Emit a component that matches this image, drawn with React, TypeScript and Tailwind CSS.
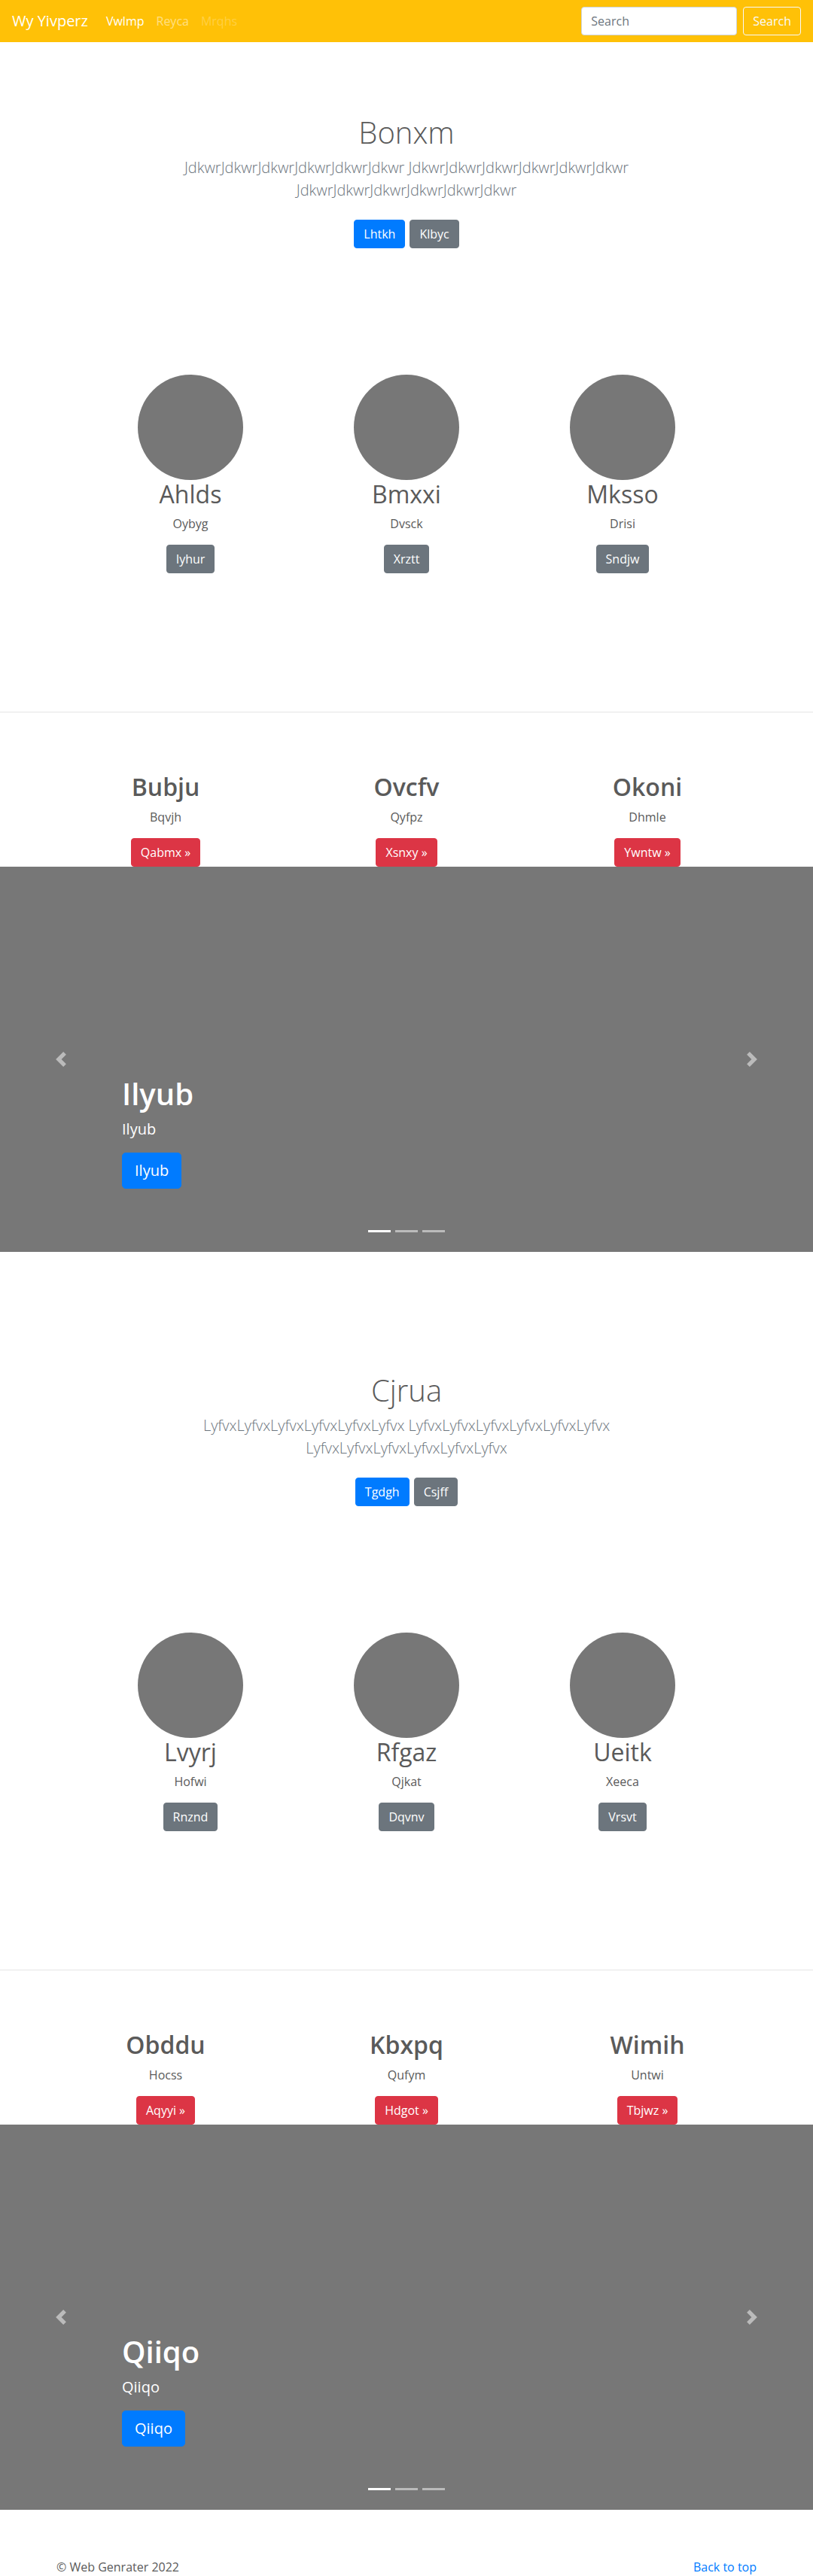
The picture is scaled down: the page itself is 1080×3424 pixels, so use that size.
import React from 'react';

type Block = {
  title: string;
  lead: string;
  actions: [string, string];
  people: { name: string; role: string; cta: string }[];
  features: { title: string; text: string; cta: string }[];
  slide: string;
};

const rep = (w: string) => w.repeat(6);

const BLOCKS: Block[] = [
  {
    title: 'Bonxm',
    lead: `${rep('Jdkwr')} ${rep('Jdkwr')} ${rep('Jdkwr')}`,
    actions: ['Lhtkh', 'Klbyc'],
    people: [
      { name: 'Ahlds', role: 'Oybyg', cta: 'Iyhur' },
      { name: 'Bmxxi', role: 'Dvsck', cta: 'Xrztt' },
      { name: 'Mksso', role: 'Drisi', cta: 'Sndjw' },
    ],
    features: [
      { title: 'Bubju', text: 'Bqvjh', cta: 'Qabmx »' },
      { title: 'Ovcfv', text: 'Qyfpz', cta: 'Xsnxy »' },
      { title: 'Okoni', text: 'Dhmle', cta: 'Ywntw »' },
    ],
    slide: 'Ilyub',
  },
  {
    title: 'Cjrua',
    lead: `${rep('Lyfvx')} ${rep('Lyfvx')} ${rep('Lyfvx')}`,
    actions: ['Tgdgh', 'Csjff'],
    people: [
      { name: 'Lvyrj', role: 'Hofwi', cta: 'Rnznd' },
      { name: 'Rfgaz', role: 'Qjkat', cta: 'Dqvnv' },
      { name: 'Ueitk', role: 'Xeeca', cta: 'Vrsvt' },
    ],
    features: [
      { title: 'Obddu', text: 'Hocss', cta: 'Aqyyi »' },
      { title: 'Kbxpq', text: 'Qufym', cta: 'Hdgot »' },
      { title: 'Wimih', text: 'Untwi', cta: 'Tbjwz »' },
    ],
    slide: 'Qiiqo',
  },
];

function Navbar() {
  return (
    <nav className="flex h-14 items-center justify-between bg-[#ffc107] px-4">
      <div className="flex items-center">
        <a href="#" className="mr-4 text-[20px] leading-[30px] text-white">
          Wy Yivperz
        </a>
        <ul className="flex text-base leading-6">
          <li>
            <a href="#" className="block px-2 py-2 text-white">
              Vwlmp
            </a>
          </li>
          <li>
            <a href="#" className="block px-2 py-2 text-white/50">
              Reyca
            </a>
          </li>
          <li>
            <span className="block px-2 py-2 text-white/25">Mrqhs</span>
          </li>
        </ul>
      </div>
      <form className="flex items-center" onSubmit={(e) => e.preventDefault()}>
        <input
          type="search"
          placeholder="Search"
          className="h-[38px] w-[207px] rounded border border-[#ced4da] bg-white px-3 text-base text-[#495057] outline-none placeholder:text-[#6c757d]"
        />
        <button
          type="submit"
          className="ml-2 h-[38px] rounded border border-[#f8f9fa] px-3 text-base text-[#f8f9fa]"
        >
          Search
        </button>
      </form>
    </nav>
  );
}

function Hero({ block }: { block: Block }) {
  return (
    <section className="pt-24 text-center">
      <h1 className="mb-2 text-[40px] leading-[48px] font-light">
        {block.title}
      </h1>
      <p className="mx-auto mb-4 max-w-[700px] text-[20px] leading-[30px] font-light text-[#6c757d]">
        {block.lead}
      </p>
      <p className="flex justify-center gap-1.5 py-2">
        <a
          href="#"
          className="rounded border border-[#007bff] bg-[#007bff] px-3 py-1.5 text-base leading-6 text-white"
        >
          {block.actions[0]}
        </a>
        <a
          href="#"
          className="rounded border border-[#6c757d] bg-[#6c757d] px-3 py-1.5 text-base leading-6 text-white"
        >
          {block.actions[1]}
        </a>
      </p>
    </section>
  );
}

function People({ block }: { block: Block }) {
  return (
    <div className="mx-auto mt-[160px] grid max-w-[861px] grid-cols-3 text-center">
      {block.people.map((p) => (
        <div key={p.name} className="flex flex-col items-center">
          <svg width="140" height="140" className="block">
            <circle cx="70" cy="70" r="70" fill="#777" />
          </svg>
          <h2 className="mb-2 text-[32px] leading-[38.4px]">{p.name}</h2>
          <p className="mb-4 text-base leading-6">{p.role}</p>
          <a
            href="#"
            className="rounded border border-[#6c757d] bg-[#6c757d] px-3 py-1.5 text-base leading-6 text-white"
          >
            {p.cta}
          </a>
        </div>
      ))}
    </div>
  );
}

function Features({ block }: { block: Block }) {
  return (
    <div className="mx-auto grid max-w-[960px] grid-cols-3 pt-20 text-center">
      {block.features.map((f) => (
        <div key={f.title} className="flex flex-col items-center">
          <h2 className="mb-2 text-[32px] leading-[38.4px] font-semibold">
            {f.title}
          </h2>
          <p className="mb-4 text-base leading-6">{f.text}</p>
          <a
            href="#"
            className="rounded border border-[#dc3545] bg-[#dc3545] px-3 py-1.5 text-base leading-6 text-white"
          >
            {f.cta}
          </a>
        </div>
      ))}
    </div>
  );
}

function Chevron({ dir }: { dir: 'left' | 'right' }) {
  return (
    <svg width="20" height="20" viewBox="0 0 8 8" fill="#fff" className="opacity-50">
      {dir === 'left' ? (
        <path d="M5.25 0l-4 4 4 4 1.5-1.5L4.25 4l2.5-2.5L5.25 0z" />
      ) : (
        <path d="M2.75 0l-1.5 1.5L3.75 4l-2.5 2.5L2.75 8l4-4-4-4z" />
      )}
    </svg>
  );
}

function Carousel({ label }: { label: string }) {
  return (
    <div className="relative mb-16 h-[512px] bg-[#777]">
      <div className="absolute inset-y-0 left-0 flex w-[15%] items-center justify-center">
        <Chevron dir="left" />
      </div>
      <div className="absolute inset-y-0 right-0 flex w-[15%] items-center justify-center">
        <Chevron dir="right" />
      </div>
      <div className="absolute right-[15%] bottom-12 left-[15%] py-5 text-left text-white">
        <h1 className="mb-2 text-[40px] leading-[48px] font-semibold">{label}</h1>
        <p className="mb-4 text-[20px] leading-[30px]">{label}</p>
        <p className="mb-4">
          <a
            href="#"
            className="inline-block rounded-[5px] border border-[#007bff] bg-[#007bff] px-4 py-2 text-[20px] leading-[30px] text-white"
          >
            {label}
          </a>
        </p>
      </div>
      <ol className="absolute right-0 bottom-[26px] left-0 flex justify-center">
        <li className="mx-[3px] h-[3px] w-[30px] bg-white" />
        <li className="mx-[3px] h-[3px] w-[30px] bg-white/50" />
        <li className="mx-[3px] h-[3px] w-[30px] bg-white/50" />
      </ol>
    </div>
  );
}

export default function App() {
  return (
    <div className="min-h-[3424px] bg-white font-['Open_Sans','Segoe_UI',sans-serif] text-[#5a5a5a]">
      <Navbar />
      {BLOCKS.map((b) => (
        <div key={b.title}>
          <Hero block={b} />
          <People block={b} />
          <hr className="mt-[184px] border-0 border-t border-[#e5e5e5]" />
          <Features block={b} />
          <Carousel label={b.slide} />
        </div>
      ))}
      <footer className="mx-auto flex max-w-[960px] justify-between px-[15px] text-base leading-6">
        <p>© Web Genrater 2022</p>
        <a href="#" className="text-[#007bff]">
          Back to top
        </a>
      </footer>
    </div>
  );
}
